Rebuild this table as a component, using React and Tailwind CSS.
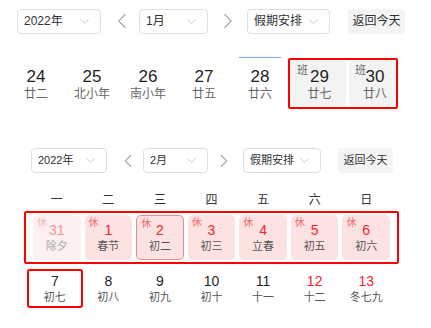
import React from 'react';
import { ChevronDown, ChevronLeft, ChevronRight } from 'lucide-react';

const Select = ({ label, className, text }) => (
  <div className={`flex h-[25px] items-center justify-between rounded-[4px] border border-[#dcdfe6] bg-white ${className}`}>
    <span className={`${text} text-[#303133]`}>{label}</span>
    <ChevronDown size={15} strokeWidth={1.3} className="text-[#b8bcc3]" />
  </div>
);

const topDays = [
  { d: 24, l: '廿二' },
  { d: 25, l: '北小年' },
  { d: 26, l: '南小年' },
  { d: 27, l: '廿五' },
  { d: 28, l: '廿六' },
];

const TopDay = ({ d, l }) => (
  <div className="flex h-[45px] flex-col items-center justify-center pt-[1px]">
    <span className="text-[17px] leading-[20px] text-[#1f1f1f]">{d}</span>
    <span className="text-[12px] leading-[15px] text-[#666]">{l}</span>
  </div>
);

const WorkDay = ({ d, l, shift }) => (
  <div className="relative flex h-[45px] flex-col items-center justify-center rounded-[4px] bg-[#f3f3f3] pt-[2px]">
    <span className="absolute left-[6px] top-[3px] text-[11px] leading-[13px] text-[#666]">班</span>
    <div className={`flex flex-col items-center ${shift}`}>
      <span className="text-[17px] leading-[20px] text-[#1f1f1f]">{d}</span>
      <span className="text-[12px] leading-[15px] text-[#666]">{l}</span>
    </div>
  </div>
);

const holidays = [
  { d: 31, l: '除夕', faded: true },
  { d: 1, l: '春节' },
  { d: 2, l: '初二', selected: true },
  { d: 3, l: '初三' },
  { d: 4, l: '立春' },
  { d: 5, l: '初五' },
  { d: 6, l: '初六' },
];

const HolCell = ({ d, l, faded, selected }) => (
  <div className="px-[2px]">
    <div
      className={`relative flex h-[45px] flex-col items-center justify-center rounded-[5px] bg-[#fde2e2] ${
        faded ? 'opacity-50' : ''
      } ${selected ? 'border border-[#f08a8a]' : ''}`}
    >
      <span className="absolute left-[4px] top-[2px] text-[10px] leading-[12px] text-[#f56c6c]">休</span>
      <span className="text-[14px] leading-[17px] text-[#f5222d]">{d}</span>
      <span className="text-[11px] leading-[14px] text-[#555]">{l}</span>
    </div>
  </div>
);

const week2 = [
  { d: 8, l: '初八' },
  { d: 9, l: '初九' },
  { d: 10, l: '初十' },
  { d: 11, l: '十一' },
  { d: 12, l: '十二', red: true },
  { d: 13, l: '冬七九', red: true },
];

const PlainCell = ({ d, l, red }) => (
  <div className="flex h-[39px] flex-col items-center justify-center">
    <span className={`text-[14px] leading-[17px] ${red ? 'text-[#f5222d]' : 'text-[#1f1f1f]'}`}>{d}</span>
    <span className="text-[11px] leading-[14px] text-[#555]">{l}</span>
  </div>
);

export default function App() {
  return (
    <div className="h-[328px] w-[431px] overflow-hidden bg-white font-['Liberation_Sans','Noto_Sans_CJK_SC',sans-serif]">
      {/* January strip */}
      <div className="pl-[17px] pt-[8px]">
        <div className="flex items-center">
          <Select label="2022年" className="w-[84px] pl-[6px] pr-[8px]" text="text-[12px]" />
          <div className="flex w-[38px] justify-center pl-[3px]">
            <ChevronLeft size={26} strokeWidth={1.1} className="text-[#a8abb2]" />
          </div>
          <Select label="1月" className="w-[69px] pl-[6px] pr-[8px]" text="text-[12px]" />
          <div className="flex w-[39px] justify-center">
            <ChevronRight size={26} strokeWidth={1.1} className="text-[#a8abb2]" />
          </div>
          <Select label="假期安排" className="w-[83px] pl-[6px] pr-[8px]" text="text-[12px]" />
          <button className="ml-[18px] h-[25px] w-[57px] rounded-[4px] bg-[#f4f4f5] text-[12px] text-[#303133]">
            返回今天
          </button>
        </div>
      </div>

      <div className="ml-[8px] mt-[23px] flex">
        <div className="w-[224px]" />
        <div className="mx-[7px] h-px w-[42px] bg-[#7ea6f5]" />
      </div>
      <div className="ml-[8px] flex items-center">
        {topDays.map((x) => (
          <div key={x.d} className="w-[56px]">
            <TopDay {...x} />
          </div>
        ))}
        <div className="grid w-[110px] grid-cols-[55px_1fr] gap-[3px] rounded-[2px] border-2 border-[#ff0000] p-[1px]">
          <WorkDay d={29} l="廿七" shift="pl-[2px]" />
          <WorkDay d={30} l="廿八" shift="pl-[6px]" />
        </div>
      </div>

      {/* February month */}
      <div className="mt-[39px] flex items-center pl-[31px]">
        <Select label="2022年" className="w-[76px] pl-[6px] pr-[8px]" text="text-[11px]" />
        <div className="flex w-[36px] justify-center pl-[5px]">
          <ChevronLeft size={22} strokeWidth={1.2} className="text-[#a8abb2]" />
        </div>
        <Select label="2月" className="w-[65px] pl-[6px] pr-[8px]" text="text-[11px]" />
        <div className="flex w-[35px] justify-center pr-[3px]">
          <ChevronRight size={22} strokeWidth={1.2} className="text-[#a8abb2]" />
        </div>
        <Select label="假期安排" className="w-[78px] pl-[6px] pr-[8px]" text="text-[11px]" />
        <button className="ml-[17px] h-[25px] w-[55px] rounded-[4px] bg-[#f4f4f5] text-[11px] text-[#303133]">
          返回今天
        </button>
      </div>

      <div className="ml-[31px] mt-[19px] grid w-[361px] grid-cols-7 text-center text-[12px] leading-[16px] text-[#333]">
        {['一', '二', '三', '四', '五', '六', '日'].map((w) => (
          <span key={w}>{w}</span>
        ))}
      </div>

      <div className="ml-[24px] mt-[3px] w-[375px] rounded-[2px] border-2 border-[#ff0000] px-[5px] py-[2px]">
        <div className="grid grid-cols-7">
          {holidays.map((h) => (
            <HolCell key={h.d} {...h} />
          ))}
        </div>
      </div>

      <div className="ml-[31px] mt-[5px] grid w-[361px] grid-cols-7">
        <div className="-ml-[4px] flex h-[39px] flex-col items-center justify-center rounded-[3px] border-2 border-[#ff0000]">
          <span className="text-[14px] leading-[17px] text-[#1f1f1f]">7</span>
          <span className="text-[11px] leading-[14px] text-[#555]">初七</span>
        </div>
        {week2.map((x) => (
          <PlainCell key={x.d} {...x} />
        ))}
      </div>
    </div>
  );
}
